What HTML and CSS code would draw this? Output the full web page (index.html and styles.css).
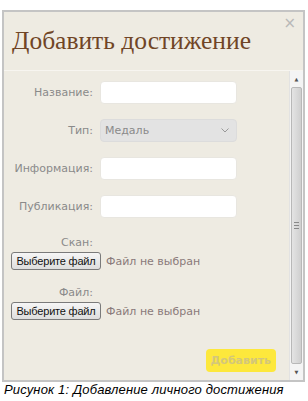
FILE: index.html
```html
<!DOCTYPE html>
<html lang="ru">
<head>
    <meta charset="UTF-8">
    <title>Добавить достижение</title>
    <link rel="stylesheet" href="styles.css">
</head>
<body>
    <div class="dialog">
        <!-- Header -->
        <div class="dialog-header">
            <h1>Добавить достижение</h1>
            <span class="close-btn">&times;</span>
        </div>

        <!-- Body with scroll -->
        <div class="dialog-body">
            <form class="form-area">
                <div class="row">
                    <label>Название:</label>
                    <input type="text" class="field">
                </div>
                <div class="row">
                    <label>Тип:</label>
                    <div class="select">
                        <span>Медаль</span>
                        <svg width="8" height="5" viewBox="0 0 8 5"><path d="M0.5 0.5 L4 4 L7.5 0.5" fill="none" stroke="#999" stroke-width="1"/></svg>
                    </div>
                </div>
                <div class="row">
                    <label>Информация:</label>
                    <input type="text" class="field">
                </div>
                <div class="row">
                    <label>Публикация:</label>
                    <input type="text" class="field">
                </div>

                <div class="file-group">
                    <label>Скан:</label>
                    <div class="file-row">
                        <span class="file-btn">Выберите файл</span>
                        <span class="file-name">Файл не выбран</span>
                    </div>
                </div>
                <div class="file-group">
                    <label>Файл:</label>
                    <div class="file-row">
                        <span class="file-btn">Выберите файл</span>
                        <span class="file-name">Файл не выбран</span>
                    </div>
                </div>

                <div class="actions">
                    <span class="submit-btn">Добавить</span>
                </div>
            </form>

            <div class="scrollbar">
                <div class="arrow">&#9650;</div>
                <div class="thumb"><span class="grip"></span></div>
                <div class="arrow">&#9660;</div>
            </div>
        </div>
    </div>
    <p class="caption">Рисунок 1: Добавление личного достижения</p>
</body>
</html>
```

FILE: styles.css
```css
body {
    margin: 0;
    padding: 10px 0 0 2px;
    background: #fff;
    font-family: "DejaVu Sans", Verdana, sans-serif;
}

.dialog {
    width: 299px;
    height: 368px;
    border: 2px solid #c4c4c4;
    background-color: #eeebe2;
    display: flex;
    flex-direction: column;
}

.dialog-header {
    height: 58px;
    border-bottom: 1px solid #f7f5f0;
    position: relative;
    flex-shrink: 0;
}

.dialog-header h1 {
    margin: 0;
    padding: 14px 0 0 8px;
    font-family: "Liberation Serif", serif;
    font-weight: normal;
    font-size: 25.5px;
    color: #704526;
}

.close-btn {
    position: absolute;
    top: 2px;
    right: 7px;
    font-family: "DejaVu Sans", sans-serif;
    font-size: 15px;
    color: #b8b8b8;
}

.dialog-body {
    flex: 1;
    display: flex;
    min-height: 0;
}

.form-area {
    flex: 1;
    padding: 10px 0 0 0;
}

.row {
    display: flex;
    align-items: center;
    margin-bottom: 15px;
}

.row label,
.file-group label {
    width: 96px;
    text-align: right;
    font-size: 11px;
    color: #8a8a8a;
    padding-right: 7px;
    box-sizing: border-box;
    display: block;
}

.field {
    width: 137px;
    height: 23px;
    box-sizing: border-box;
    border: 1px solid #e8e6e0;
    border-radius: 4px;
    background: #fff;
    margin: 0;
}

.select {
    width: 137px;
    height: 23px;
    box-sizing: border-box;
    border: 1px solid #dcdcdc;
    border-radius: 4px;
    background: #e3e3e3;
    display: flex;
    align-items: center;
    justify-content: space-between;
    padding: 0 7px 0 4px;
    font-size: 11px;
    color: #8a8a8a;
}

.file-group {
    margin-top: 18px;
}

.file-group + .file-group {
    margin-top: 16px;
}

.file-row {
    display: flex;
    align-items: center;
    margin-top: 3px;
    padding-left: 7px;
}

.file-btn {
    display: inline-block;
    width: 90px;
    height: 18px;
    box-sizing: border-box;
    border: 1px solid #7a7a7a;
    border-radius: 3px;
    background: linear-gradient(#f6f6f6, #dedede);
    font-family: "Liberation Sans", Arial, sans-serif;
    font-size: 11px;
    line-height: 16px;
    text-align: center;
    color: #111;
    letter-spacing: -0.2px;
}

.file-name {
    margin-left: 5px;
    font-size: 11px;
    color: #8a7a7a;
}

.actions {
    display: flex;
    justify-content: flex-end;
    margin-top: 29px;
    padding-right: 13px;
}

.submit-btn {
    display: inline-block;
    background-color: #fde83c;
    color: #d4c77a;
    font-size: 11px;
    font-weight: bold;
    padding: 5px 5px;
    border-radius: 4px;
}

.scrollbar {
    width: 13px;
    display: flex;
    flex-direction: column;
    background: #f4f4f4;
    border-left: 1px solid #e2e2e2;
}

.arrow {
    height: 16px;
    font-size: 5px;
    color: #555;
    text-align: center;
    line-height: 16px;
}

.thumb {
    flex: 1;
    margin: 0 1px;
    border: 1px solid #b8b8b8;
    border-radius: 2px;
    background: linear-gradient(to right, #e4e4e4, #cfcfcf);
    display: flex;
    align-items: center;
    justify-content: center;
}

.grip {
    width: 5px;
    height: 5px;
    border-top: 1px solid #888;
    border-bottom: 1px solid #888;
    background: linear-gradient(#888, #888) center / 5px 1px no-repeat;
}

.caption {
    margin: 0 0 0 2px;
    font-family: "Liberation Sans", Arial, sans-serif;
    font-style: italic;
    font-size: 13px;
    letter-spacing: 0.15px;
    color: #000;
}
```
